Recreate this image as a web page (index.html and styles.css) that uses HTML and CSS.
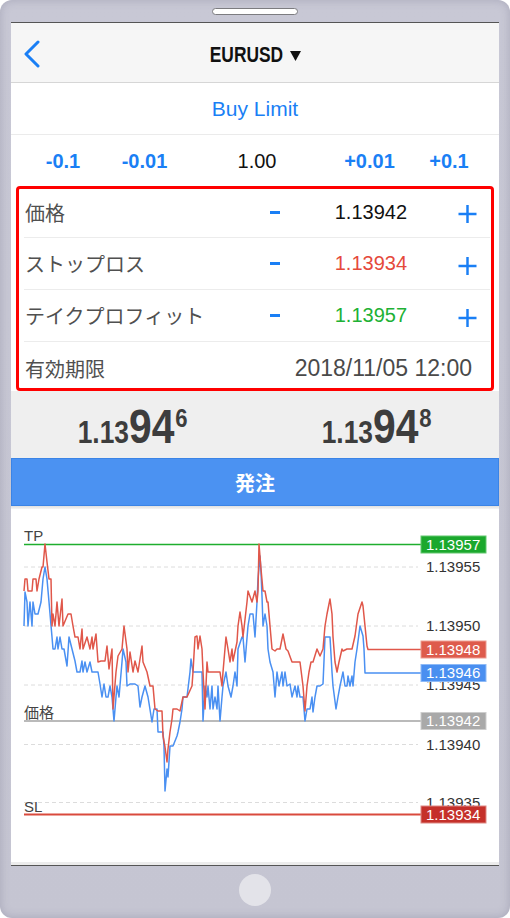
FILE: index.html
```html
<!DOCTYPE html>
<html lang="ja">
<head>
<meta charset="utf-8">
<title>EURUSD Buy Limit</title>
<link rel="stylesheet" href="styles.css">
</head>
<body>
<div class="phone">
  <div class="speaker"></div>
  <div class="screen">
    <header class="nav">
      <div class="back">
        <svg width="17" height="28" viewBox="0 0 17 28"><polyline points="15,2 3,14 15,26" fill="none" stroke="#1a7ff5" stroke-width="3" stroke-linecap="round" stroke-linejoin="round"/></svg>
      </div>
      <div class="title"><span class="sym">EURUSD</span><svg class="caret" width="11" height="10" viewBox="0 0 11 10"><polygon points="0,0 11,0 5.5,10" fill="#111"/></svg></div>
      <div></div>
    </header>
    <div class="type">Buy Limit</div>
    <div class="lots">
      <span class="step">-0.1</span>
      <span class="step">-0.01</span>
      <span class="lot">1.00</span>
      <span class="step">+0.01</span>
      <span class="step">+0.1</span>
    </div>
    <div class="form">
      <div class="row first">
        <span class="label">価格</span>
        <span class="minus"></span>
        <span class="val">1.13942</span>
        <svg class="plus" viewBox="0 0 19 19"><path d="M9.5 0V19M0 9.5H19" stroke="#1a7ff5" stroke-width="2.6"/></svg>
      </div>
      <div class="row">
        <span class="label">ストップロス</span>
        <span class="minus"></span>
        <span class="val sl">1.13934</span>
        <svg class="plus" viewBox="0 0 19 19"><path d="M9.5 0V19M0 9.5H19" stroke="#1a7ff5" stroke-width="2.6"/></svg>
      </div>
      <div class="row">
        <span class="label">テイクプロフィット</span>
        <span class="minus"></span>
        <span class="val tp">1.13957</span>
        <svg class="plus" viewBox="0 0 19 19"><path d="M9.5 0V19M0 9.5H19" stroke="#1a7ff5" stroke-width="2.6"/></svg>
      </div>
      <div class="row last">
        <span class="label">有効期限</span>
        <span class="date">2018/11/05 12:00</span>
      </div>
    </div>
    <div class="quotes">
      <div class="quote"><span class="q-s">1.13</span><span class="q-b">94</span><span class="q-p">6</span></div>
      <div class="quote"><span class="q-s">1.13</span><span class="q-b">94</span><span class="q-p">8</span></div>
    </div>
    <button class="order">発注</button>
    <div class="sep"></div>
    <div class="chart">
      <svg width="488" height="353" viewBox="11 510 488 353">
        <g class="grid">
          <line x1="24" y1="568" x2="418" y2="568"/>
          <line x1="24" y1="627" x2="418" y2="627"/>
          <line x1="24" y1="686" x2="418" y2="686"/>
          <line x1="24" y1="745.5" x2="418" y2="745.5"/>
          <line x1="24" y1="803.5" x2="418" y2="803.5"/>
        </g>
        <g class="axis">
          <text x="426" y="573">1.13955</text>
          <text x="426" y="632">1.13950</text>
          <text x="426" y="691">1.13945</text>
          <text x="426" y="750.5">1.13940</text>
          <text x="426" y="808.5">1.13935</text>
        </g>
        <line x1="24" y1="545.5" x2="421" y2="545.5" stroke="#1fae2e" stroke-width="1.5"/>
        <line x1="24" y1="722" x2="421" y2="722" stroke="#a3a3a3" stroke-width="1.5"/>
        <line x1="24" y1="815.5" x2="421" y2="815.5" stroke="#d94a3d" stroke-width="2"/>
        <polyline class="bid" points="24,627 25,593 27,603 28,627 30,603 32,627 33,603 35,615 38,615 41,603 43,580 45,568 47,580 49,603 52,638 53,650 55,650 57,638 58,650 60,638 62,650 64,650 67,667 69,638 72,650 75,662 77,673 80,673 82,662 83,673 85,663 87,673 90,663 92,673 95,673 98,673 100,685 102,698 104,685 106,698 108,698 110,687 112,698 114,722 116,698 117,687 119,698 122,663 123,650 126,663 127,687 130,685 135,685 138,687 140,708 142,698 145,687 148,698 152,723 154,710 157,710 158,733 161,733 163,733 164,747 165,792 167,770 168,778 170,747 173,747 177,737 178,733 180,723 182,710 183,698 187,698 190,673 191,660 193,673 202,673 203,722 205,687 207,698 208,687 210,710 212,687 213,710 215,698 217,710 218,687 220,722 222,698 223,687 226,673 228,687 231,698 233,687 235,673 237,687 238,650 242,638 243,638 245,663 248,627 250,615 253,615 255,638 257,603 258,580 260,557 261,573 262,597 263,627 265,615 267,627 268,650 270,663 273,673 275,698 277,673 279,687 282,673 283,687 285,673 287,687 290,685 292,698 295,687 297,698 298,687 300,698 303,698 305,722 307,710 310,710 312,698 313,713 315,698 317,687 320,687 323,685 325,638 330,638 332,673 333,687 336,710 338,698 340,687 343,673 345,687 347,687 348,677 350,687 352,677 353,687 355,663 357,650 360,627 363,637 364,650 365,674 421,674"/>
        <polyline class="ask" points="24,592 25,580 27,580 28,592 32,592 33,580 36,580 37,592 39,580 42,568 43,568 45,545 47,563 49,580 51,580 52,627 53,615 55,627 57,603 59,627 62,600 63,627 68,615 71,615 73,627 75,638 78,638 80,650 82,630 83,650 87,638 90,650 92,638 93,650 96,635 98,663 101,662 105,662 107,647 109,670 112,650 113,710 116,673 118,657 122,650 124,627 127,650 128,673 130,653 133,673 135,662 138,673 142,647 143,663 147,673 150,687 153,687 155,710 158,712 162,712 163,737 165,748 167,763 168,750 170,733 172,720 173,710 177,710 180,712 183,698 187,698 192,687 193,673 195,638 197,637 198,650 200,637 202,650 203,673 205,710 207,663 208,673 220,673 222,687 223,673 226,638 228,650 230,663 232,650 233,662 237,643 238,627 240,613 242,627 243,638 247,603 248,592 252,603 255,592 257,603 258,592 259,545 261,570 263,592 265,592 267,603 268,603 270,627 272,650 275,652 277,650 280,650 283,635 286,650 288,652 292,663 300,663 303,687 305,712 307,687 309,673 311,663 313,663 317,650 320,657 323,650 325,627 327,615 330,600 332,615 333,638 335,663 337,673 339,663 342,650 343,652 347,650 352,650 355,637 358,615 362,603 363,607 365,627 367,647 368,650.5 421,650.5"/>
        <g class="tags">
          <rect x="421" y="537" width="65" height="17" fill="#1ba82d" stroke="#63c76f"/>
          <text x="426" y="550.5">1.13957</text>
          <rect x="421" y="642" width="65" height="17" fill="#de5b4c" stroke="#eb9b90"/>
          <text x="426" y="655.5">1.13948</text>
          <rect x="421" y="665.5" width="65" height="17" fill="#4a8ff0" stroke="#8ebaf6"/>
          <text x="426" y="679">1.13946</text>
          <rect x="421" y="713.5" width="65" height="17" fill="#a9a9a9" stroke="#cdcdcd"/>
          <text x="426" y="727">1.13942</text>
          <rect x="421" y="807" width="65" height="17" fill="#c5302a" stroke="#dd8883"/>
          <text x="426" y="820.5">1.13934</text>
        </g>
        <g class="names">
          <text x="24" y="541.5">TP</text>
          <text x="24" y="718.5" class="jp">価格</text>
          <text x="24" y="813">SL</text>
        </g>
      </svg>
    </div>
    <div class="foot"></div>
  </div>
  <div class="home"></div>
</div>
</body>
</html>
```
FILE: styles.css
```css
html, body {
  margin: 0;
  padding: 0;
  background: #ffffff;
}

.phone {
  width: 510px;
  height: 918px;
  box-sizing: border-box;
  padding-top: 8px;
  background: linear-gradient(#c8c8d5, #c5c5d2);
  border-radius: 12px;
  box-shadow: inset 0 0 10px rgba(90, 90, 120, 0.28);
  display: flex;
  flex-direction: column;
  align-items: center;
}

.speaker {
  width: 86px;
  height: 7px;
  box-sizing: border-box;
  border: 1px solid #7c7c80;
  background: #ffffff;
  border-radius: 4px;
  margin-bottom: 7px;
}

.screen {
  width: 488px;
  border-top: 1px solid #555555;
  border-bottom: 1px solid #555555;
  background: #ffffff;
  font-family: "Liberation Sans", Arial, sans-serif;
}

.home {
  width: 32px;
  height: 32px;
  border-radius: 50%;
  background: #e3e3e9;
  margin-top: 8px;
}

/* header */
.nav {
  height: 59px;
  background: #f6f6f6;
  border-bottom: 1px solid #d6d6d6;
  display: grid;
  grid-template-columns: 1fr auto 1fr;
  align-items: center;
}

.back {
  padding-left: 12px;
  padding-top: 2px;
  display: flex;
}

.title {
  display: flex;
  align-items: center;
  padding-top: 5px;
}

.sym {
  display: inline-block;
  font-weight: bold;
  font-size: 22px;
  color: #111111;
  transform: scaleX(0.79);
  margin: 0 -9.8px;
}

.caret {
  margin-left: 7px;
  margin-top: 1px;
}

/* order type */
.type {
  height: 51px;
  border-bottom: 1px solid #ebebeb;
  display: flex;
  align-items: center;
  justify-content: center;
  color: #1a7ff5;
  font-size: 21px;
}

/* lot row */
.lots {
  height: 51px;
  box-sizing: border-box;
  padding-top: 2px;
  display: grid;
  grid-template-columns: 104px 59px 166px 59px 100px;
  align-items: center;
  justify-items: center;
  font-size: 20px;
}

.step {
  color: #1a7ff5;
  font-weight: bold;
}

.lot {
  color: #111111;
}

/* form box */
.form {
  margin: 0 5px;
  border: 3px solid #ff0000;
  border-radius: 4px;
}

.row {
  margin: 0 1px 0 5px;
  height: 51px;
  border-bottom: 1px solid #ececec;
  display: grid;
  grid-template-columns: 236px 30px 117px 1fr;
  align-items: center;
}

.row.first {
  height: 49px;
  box-sizing: border-box;
  padding-bottom: 2px;
}

.row.last {
  height: 46px;
  box-sizing: border-box;
  padding-top: 6px;
  border-bottom: 0;
  display: flex;
  justify-content: space-between;
  align-items: center;
}

.label {
  padding-left: 1px;
  color: #505050;
  font-family: "Noto Sans CJK JP", sans-serif;
  font-size: 20px;
}

.minus {
  justify-self: center;
  width: 10px;
  height: 3px;
  background: #1a7ff5;
}

.val {
  justify-self: end;
  font-size: 20px;
  color: #111111;
}

.val.sl {
  color: #e5493b;
}

.val.tp {
  color: #20b134;
}

.plus {
  justify-self: end;
  width: 19px;
  height: 18px;
  margin-right: 13px;
  margin-top: 4px;
}

.date {
  margin-right: 18px;
  font-size: 23px;
  color: #4a4a4a;
}

/* quotes */
.quotes {
  height: 67px;
  box-sizing: border-box;
  padding-top: 4px;
  background: #efefef;
  display: grid;
  grid-template-columns: 1fr 1fr;
  align-items: center;
  justify-items: center;
}

.quote {
  font-weight: bold;
  color: #3d3d3d;
  font-size: 48px;
  line-height: 1;
  white-space: nowrap;
  transform: scaleX(0.85);
}

.q-s {
  font-size: 31px;
}

.q-b {
  font-size: 48px;
}

.q-p {
  font-size: 26px;
  vertical-align: 16px;
  margin-left: 1px;
}

/* order button */
.order {
  display: block;
  width: 100%;
  height: 48px;
  box-sizing: border-box;
  margin: 0;
  padding: 0;
  background: #4b92f2;
  border: 1px solid #3b84e6;
  color: #ffffff;
  font-family: "Noto Sans CJK JP", sans-serif;
  font-weight: bold;
  font-size: 20px;
}

.sep {
  height: 3px;
  background: linear-gradient(#e0e0e0, #f5f5f5);
}

/* chart */
.chart {
  height: 353px;
}

.chart svg {
  display: block;
}

.grid line {
  stroke: #dcdcdc;
  stroke-width: 1;
  stroke-dasharray: 4 3;
}

.chart text {
  font-family: "Liberation Sans", Arial, sans-serif;
  font-size: 15px;
}

.axis text {
  fill: #333333;
}

.tags text {
  fill: #ffffff;
}

.names text {
  fill: #444444;
}

.names .jp {
  font-family: "Noto Sans CJK JP", sans-serif;
}

.bid {
  fill: none;
  stroke: #4a90f2;
  stroke-width: 1.5;
  stroke-linejoin: round;
}

.ask {
  fill: none;
  stroke: #e0574a;
  stroke-width: 1.5;
  stroke-linejoin: round;
}

.foot {
  height: 3px;
  background: #ececec;
}
```
